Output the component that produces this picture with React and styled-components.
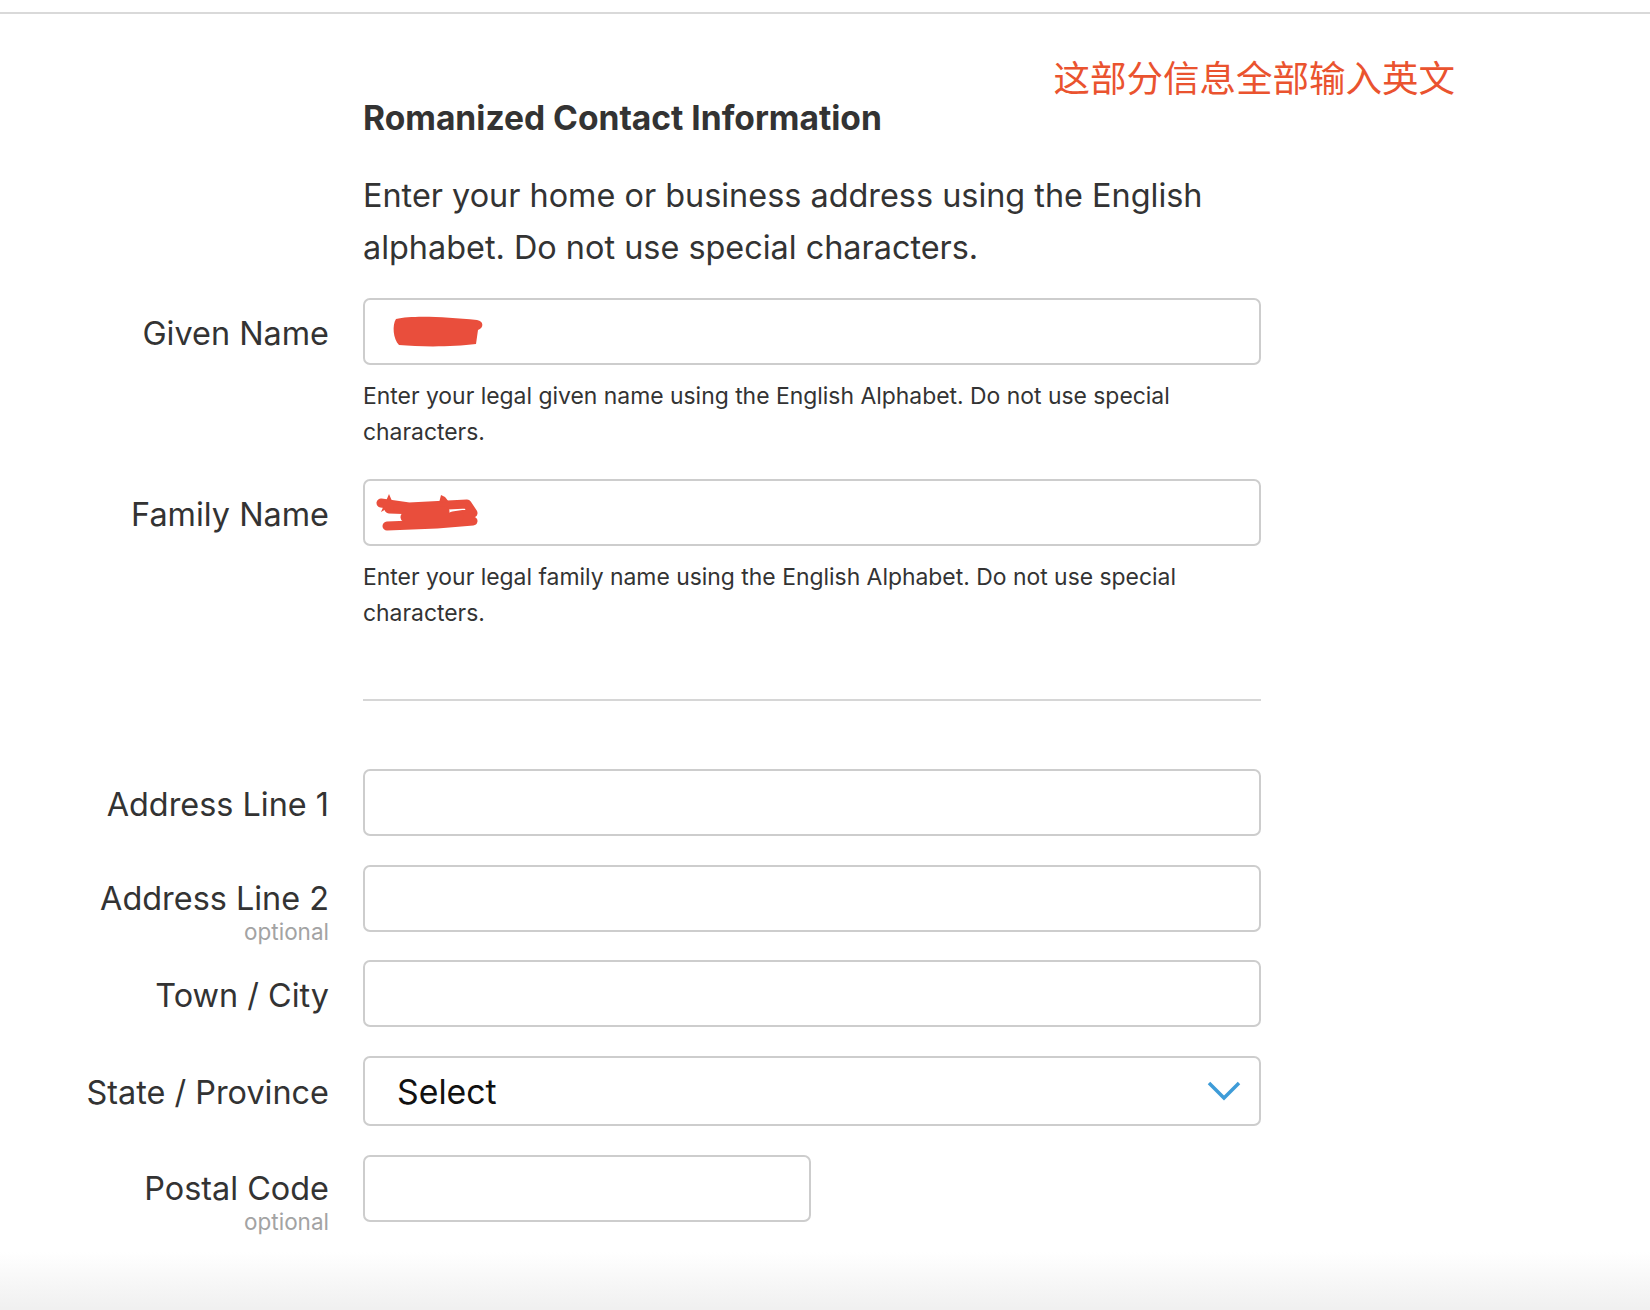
import React from 'react'
import styled, { createGlobalStyle } from 'styled-components'

const GlobalStyle = createGlobalStyle`
  body {
    margin: 0;
    background: #fff;
    font-family: Inter, "Noto Sans", "Noto Sans CJK SC", sans-serif;
    color: #333;
  }
`

const TopRule = styled.div`
  margin-top: 12px;
  height: 2px;
  background: #d9d9d9;
`

const Note = styled.div`
  width: 1455px;
  margin-top: 43px;
  text-align: right;
  font-family: "Noto Sans CJK SC", sans-serif;
  font-size: 36.5px;
  line-height: 40px;
  color: #ea532f;
`

const FieldRow = styled.div`
  display: grid;
  grid-template-columns: 329px ${(p) => p.$width || 898}px;
  column-gap: 34px;
  margin-top: ${(p) => p.$top || 0}px;
`

const Heading = styled.h2`
  grid-column: 2;
  margin: 0;
  font-size: 33.6px;
  line-height: 40px;
  font-weight: 700;
  color: #333;
`

const Intro = styled.p`
  grid-column: 2;
  margin: 0;
  font-size: 32.4px;
  line-height: 52px;
  color: #333;
`

const LabelCell = styled.div`
  box-sizing: border-box;
  height: ${(p) => p.$height || 67}px;
  padding-top: ${(p) => p.$pad || 16}px;
  text-align: right;
  white-space: nowrap;
`

const LabelText = styled.div`
  font-size: 32.4px;
  line-height: 39px;
  color: #333;
`

const Optional = styled.div`
  font-size: 22.5px;
  line-height: 27px;
  color: #a3a3a3;
`

const Control = styled.div`
  display: flex;
  flex-direction: column;
`

const InputBox = styled.div`
  box-sizing: border-box;
  height: ${(p) => p.$height || 67}px;
  border: 2px solid #cdcdcd;
  border-radius: 7px;
  background: #fff;
  display: flex;
  align-items: center;
  padding: 0 ${(p) => p.$padX || 0}px;
`

const SelectText = styled.span`
  flex: 1;
  font-size: 33.8px;
  color: #111;
  padding-left: 14px;
`

const Help = styled.p`
  margin: 13px 0 0;
  font-size: 22.9px;
  line-height: 36px;
  color: #333;
  padding-right: 40px;
`

const Divider = styled.div`
  grid-column: 2;
  height: 2px;
  background: #d6d6d6;
`

const BottomFade = styled.div`
  margin-top: 30px;
  height: 60px;
  background: linear-gradient(#fff, #efefef);
`

const ScribbleGiven = () => (
  <svg width="94" height="38" viewBox="0 0 94 38" style={{ marginLeft: 26 }}>
    <path
      d="M5 6 C 22 2, 55 4, 86 7 C 93 8, 93 15, 87 17 L 85 31 C 62 34, 30 34, 8 32 C 2 26, 1 12, 5 6 Z"
      fill="#e94e3c"
    />
  </svg>
)

const ScribbleFamily = () => (
  <svg width="108" height="40" viewBox="0 0 108 40" style={{ marginLeft: 10 }}>
    <g fill="none" stroke="#e94e3c" strokeWidth="9" strokeLinecap="round" strokeLinejoin="round">
      <path d="M6 10 L 34 14 L 92 11 L 98 20 L 78 23 L 98 28 L 62 31 L 12 33" />
      <path d="M14 16 L 70 18 L 30 24 L 84 24" />
    </g>
    <path d="M14 1 L 17 8 L 24 9 L 18 13 L 20 20 L 13 15 L 6 19 L 9 12 L 3 8 L 11 8 Z" fill="#e94e3c" />
    <path d="M66 2 L 70 4 L 74 9 L 64 10 Z" fill="#e94e3c" />
  </svg>
)

const Chevron = () => (
  <svg width="34" height="20" viewBox="0 0 34 20">
    <polyline points="2,2 17,17 32,2" fill="none" stroke="#3e9cd8" strokeWidth="3.5" />
  </svg>
)

const Field = ({ label, optional, top, width, pad, height, children, help }) => (
  <FieldRow $top={top} $width={width}>
    <LabelCell $pad={pad} $height={height}>
      <LabelText>{label}</LabelText>
      {optional && <Optional>optional</Optional>}
    </LabelCell>
    <Control>
      {children}
      {help && <Help>{help}</Help>}
    </Control>
  </FieldRow>
)

export default function App() {
  return (
    <>
      <GlobalStyle />
      <TopRule />
      <Note>这部分信息全部输入英文</Note>
      <FieldRow $top={1}>
        <Heading>Romanized Contact Information</Heading>
      </FieldRow>
      <FieldRow $top={32}>
        <Intro>
          Enter your home or business address using the English alphabet. Do not use special
          characters.
        </Intro>
      </FieldRow>

      <Field
        label="Given Name"
        top={24}
        help="Enter your legal given name using the English Alphabet. Do not use special characters."
      >
        <InputBox>
          <ScribbleGiven />
        </InputBox>
      </Field>

      <Field
        label="Family Name"
        top={29}
        help="Enter your legal family name using the English Alphabet. Do not use special characters."
      >
        <InputBox>
          <ScribbleFamily />
        </InputBox>
      </Field>

      <FieldRow $top={68}>
        <Divider />
      </FieldRow>

      <Field label="Address Line 1" top={68}>
        <InputBox />
      </Field>
      <Field label="Address Line 2" optional top={29} pad={14}>
        <InputBox />
      </Field>
      <Field label="Town / City" top={28}>
        <InputBox />
      </Field>
      <Field label="State / Province" top={29} pad={17} height={70}>
        <InputBox $height={70} $padX={18}>
          <SelectText>Select</SelectText>
          <Chevron />
        </InputBox>
      </Field>
      <Field label="Postal Code" optional top={29} width={448} pad={14}>
        <InputBox />
      </Field>
      <BottomFade />
    </>
  )
}
